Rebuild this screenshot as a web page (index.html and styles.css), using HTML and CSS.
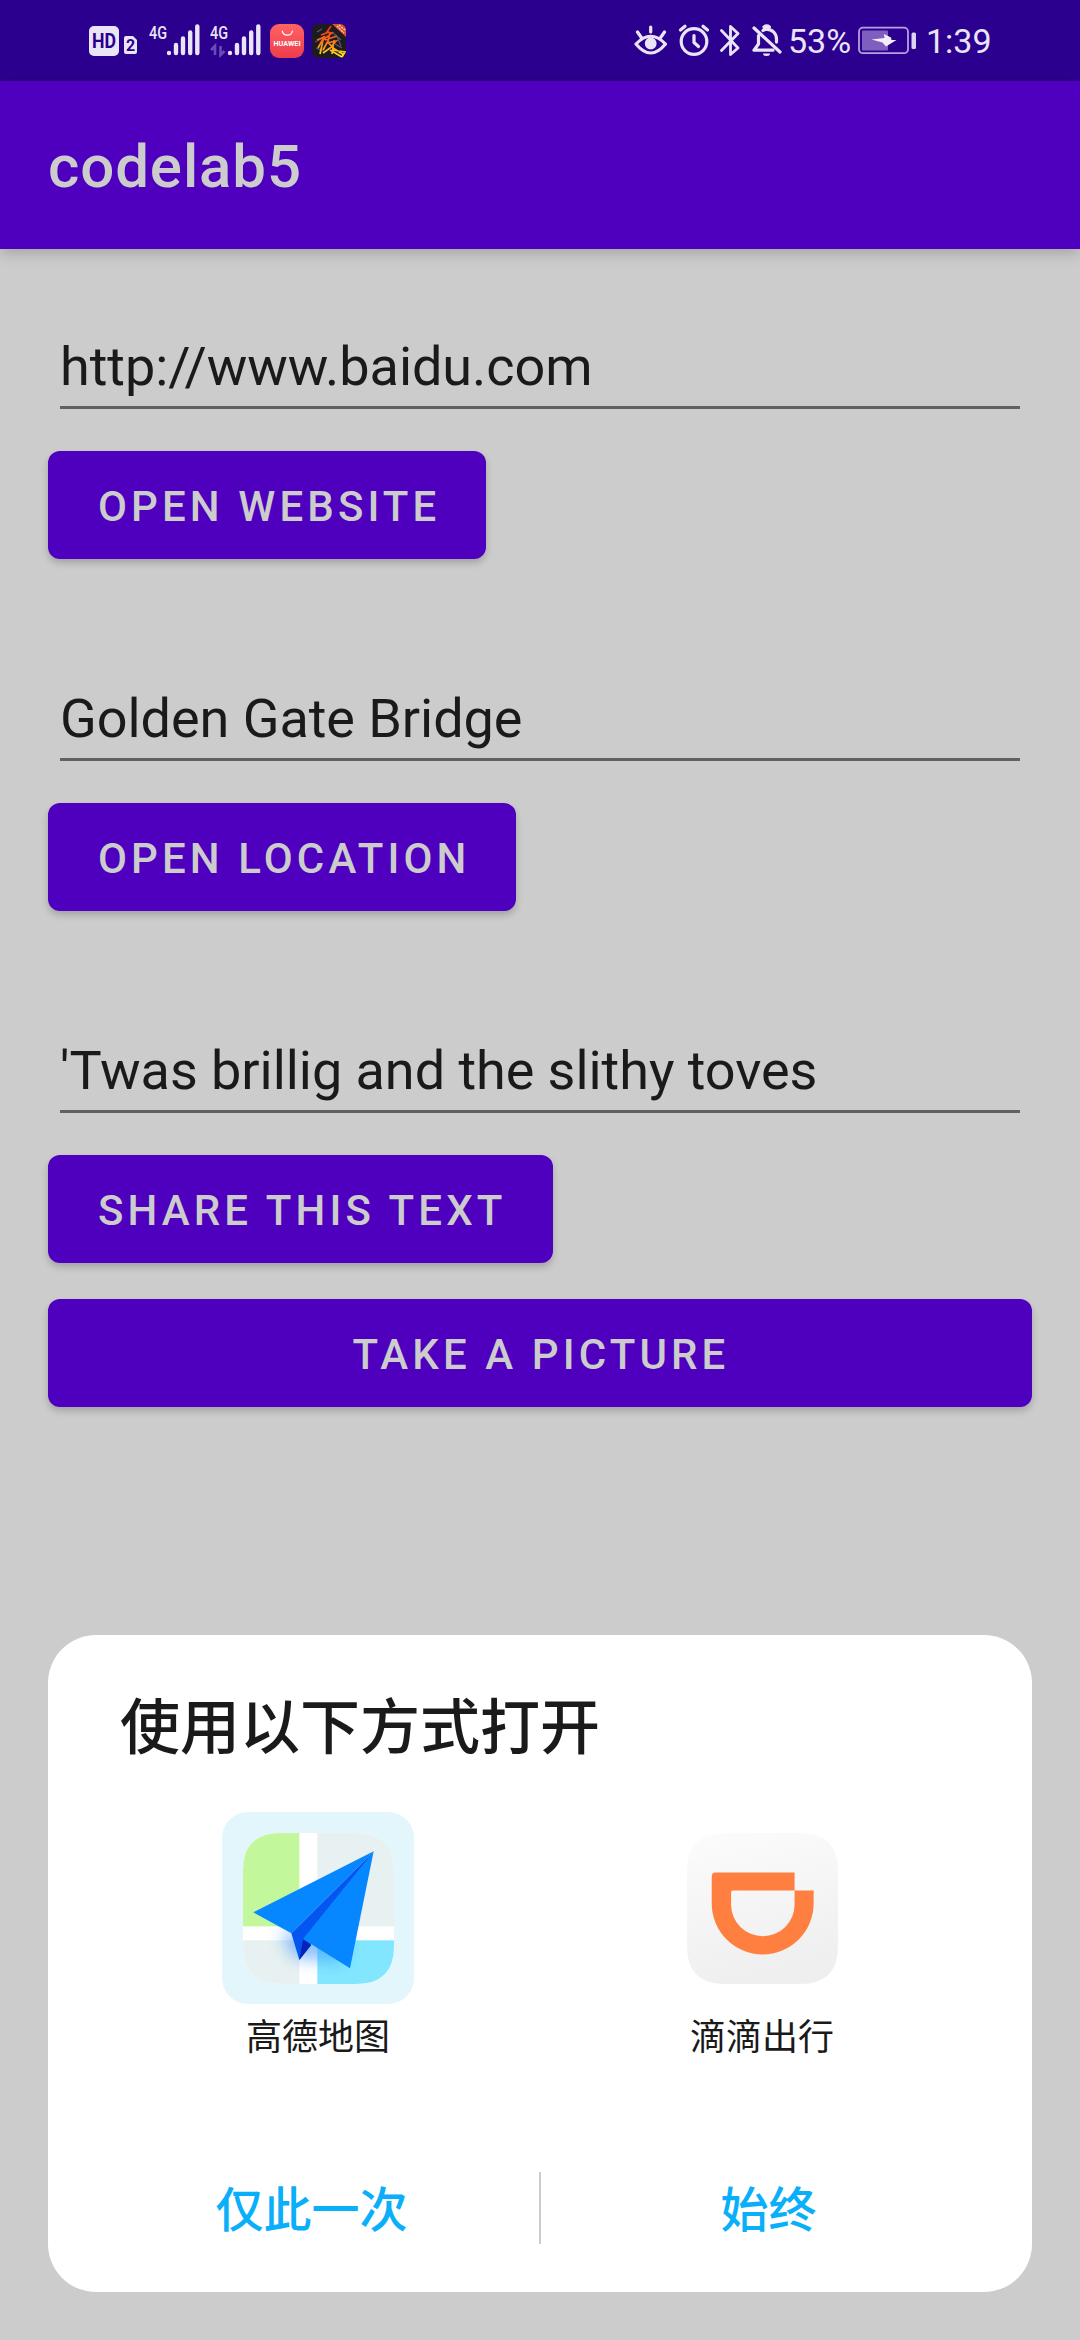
FILE: index.html
```html
<!DOCTYPE html>
<html lang="zh-CN">
<head>
<meta charset="utf-8">
<title>codelab5</title>
<link rel="stylesheet" href="styles.css">
</head>
<body>
<div class="screen">
  <header class="status">
    <div class="status-left">
      <svg class="icon-hd" width="48" height="34" viewBox="0 0 48 34">
        <rect x="0" y="2" width="30" height="30" rx="5" fill="#eae4f7"/>
        <text class="hd-text" x="15" y="24" textLength="24" lengthAdjust="spacingAndGlyphs">HD</text>
        <path d="M37 12h7l4 4v12a2 2 0 0 1-2 2h-9a2 2 0 0 1-2-2V14a2 2 0 0 1 2-2z" fill="#eae4f7"/>
        <text class="sim-text" x="41.5" y="27">2</text>
      </svg>
      <svg class="icon-signal" width="51" height="42" viewBox="0 -8 51 42">
        <text class="net-text" x="0" y="14.5" textLength="18" lengthAdjust="spacingAndGlyphs">4G</text>
        <path class="bars" d="M20 29v0M27 21v8M34 14.5v14.5M41.2 8.5V29M48.3 2.5V29"/>
      </svg>
      <svg class="icon-signal second" width="51" height="42" viewBox="0 -8 51 42">
        <text class="net-text" x="0" y="14.5" textLength="18" lengthAdjust="spacingAndGlyphs">4G</text>
        <path d="M1 26l4-4v9M10.500 22v9l4-4" fill="none" stroke="#6b4cb5" stroke-width="2.600"/>
        <path class="bars" d="M20 29v0M27 21v8M34 14.500v14.500M41.200 8.500V29M48.300 2.500V29"/>
      </svg>
      <svg class="icon-app" width="34" height="34" viewBox="0 0 34 34">
        <defs><linearGradient id="hw" x2="0" y2="1"><stop offset="0" stop-color="#ff6363"/><stop offset="1" stop-color="#ec3c4c"/></linearGradient></defs>
        <rect width="34" height="34" rx="9" fill="url(#hw)"/>
        <path d="M12.300 7a5 4.200 0 0 0 10 0" fill="none" stroke="#fff" stroke-width="1.200" stroke-linecap="round"/>
        <text class="hw-text" x="17" y="22" textLength="27" lengthAdjust="spacingAndGlyphs">HUAWEI</text>
      </svg>
      <svg class="icon-game" width="34" height="34" viewBox="0 0 34 34">
        <defs>
          <linearGradient id="fire" gradientUnits="userSpaceOnUse" x1="0" y1="2" x2="0" y2="32"><stop offset="0" stop-color="#f02a16"/><stop offset=".5" stop-color="#f5701c"/><stop offset="1" stop-color="#ffe21c"/></linearGradient>
          <clipPath id="gc"><rect width="34" height="34" rx="6"/></clipPath>
        </defs>
        <g clip-path="url(#gc)">
          <rect width="34" height="34" fill="#1c1c20"/>
          <path d="M5 8l5-3M3 18l6-3M20 8l9 8M25 13l4 9M4 24l7 3M23 20l7 4" stroke="#5c5c60" stroke-width="1.200" fill="none"/>
          <path d="M19 2l-4 6 5 1-9 7M9 11l8-3M5 16l7-3-6 11M12 12l-4 18M13 16l12-4M18 8l-2 9-5 9M14 19l10-2-6 7-7 5M16 18l5 6 11 7M22 16l-2 14M20 26l13 2-3 5-12-7" fill="none" stroke="url(#fire)" stroke-width="1.700"/>
          <path d="M20 0h14v13z" fill="#d9522c"/>
          <path d="M25 2l7 7M27 1l6 5" stroke="#f8d2b8" stroke-width="1.400" stroke-dasharray="2 1"/>
        </g>
      </svg>
    </div>
    <div class="status-right">
      <svg class="line-icon" width="34" height="34" viewBox="0 0 34 34">
        <path d="M2 20Q16.700 4.500 31.500 20Q16.700 38 2 20zM16.700 3v5M3.500 8l3.500 5M30.500 8L27 13"/>
        <circle class="solid" cx="16.700" cy="19.500" r="4.300"/>
      </svg>
      <svg class="line-icon alarm" width="32" height="34" viewBox="0 0 32 34">
        <circle cx="16" cy="17.500" r="12.800"/><path d="M16 11.500v7l4.500 4M2.500 6L7 2.300M29.500 6L25 2.300"/>
      </svg>
      <svg class="line-icon bluetooth" width="20" height="34" viewBox="0 0 20 34">
        <path d="M1.500 6.500L18 24l-7.500 6.500V2.500L18 9.500 1.500 26.500"/>
      </svg>
      <svg class="line-icon bell" width="30" height="34" viewBox="0 0 30 34">
        <path d="M2 4l26 24M6.500 11.500v8.500L2 26.200h19M11 6.500c1-.7 2-1.200 3-1.400 7 0 10.500 5 10.500 10v3M12 3q2.700-2 5.400 0"/>
        <path class="solid" d="M11 29.500h7a3.500 2.500 0 0 1-7 0z" stroke="none"/>
      </svg>
      <span class="status-text percent">53%</span>
      <svg class="battery" width="59" height="34" viewBox="0 0 59 34">
        <rect x="1" y="3.700" width="49" height="25.500" rx="4" fill="none" stroke="#b7a1e0" stroke-width="1.800"/>
        <rect x="4" y="6.500" width="26" height="20" rx="1" fill="#7e5fc0"/>
        <path d="M26 10l7 3.500 .5 2.500H38.500L28 22.500 24.500 18.500 13.500 15.500 26.500 14z" fill="#f2eefb"/>
        <rect x="53.500" y="8.500" width="4.500" height="16.500" rx="1.500" fill="#dcd2f2"/>
      </svg>
      <span class="status-text clock">1:39</span>
    </div>
  </header>
  <div class="appbar"><h1 class="app-title">codelab5</h1></div>
  <main class="content">
    <div class="field">http://www.baidu.com</div>
    <button class="btn">OPEN WEBSITE</button>
    <div class="field">Golden Gate Bridge</div>
    <button class="btn">OPEN LOCATION</button>
    <div class="field">'Twas brillig and the slithy toves</div>
    <button class="btn">SHARE THIS TEXT</button>
    <button class="btn wide">TAKE A PICTURE</button>
  </main>
  <section class="sheet">
    <h2 class="sheet-title">使用以下方式打开</h2>
    <div class="apps">
      <div class="app">
        <div class="tile selected">
          <svg width="151" height="151" viewBox="128 127 453 453">
            <defs>
              <clipPath id="mapclip"><path d="M128 240Q128 127 241 127H468Q581 127 581 240V467Q581 580 468 580H241Q128 580 128 467Z"/></clipPath>
              <filter id="soft" x="-40%" y="-40%" width="180%" height="180%"><feGaussianBlur stdDeviation="24"/></filter>
            </defs>
            <g clip-path="url(#mapclip)">
              <rect x="128" y="127" width="453" height="453" fill="#fff"/>
              <rect x="128" y="127" width="169" height="280" fill="#c2f79b"/>
              <rect x="351" y="127" width="230" height="280" fill="#e8f1f1"/>
              <rect x="128" y="449" width="169" height="131" fill="#e8f1f1"/>
              <rect x="351" y="449" width="230" height="131" fill="#82e6ff"/>
              <path d="M240 425L440 430 420 515 280 500z" fill="#3796ff" opacity=".6" filter="url(#soft)"/>
            </g>
            <path d="M520 182L273 428 297 508 340 450z" fill="#0555f0"/>
            <path d="M308 446L297 508 333 463z" fill="#0523b8"/>
            <path d="M520 182L159 365 273 428z" fill="#0787ff"/>
            <path d="M520 182L308 445 449 533z" fill="#0787ff"/>
          </svg>
        </div>
        <span class="app-name">高德地图</span>
      </div>
      <div class="app">
        <div class="tile">
          <svg width="151" height="151" viewBox="80 98 452 452">
            <defs><linearGradient id="dd" x2=".25" y2="1"><stop offset="0" stop-color="#fcfcfc"/><stop offset="1" stop-color="#efefef"/></linearGradient></defs>
            <path d="M80 211Q80 98 193 98H419Q532 98 532 211V437Q532 550 419 550H193Q80 550 80 437Z" fill="url(#dd)"/>
            <path fill="#ff7f41" fill-rule="evenodd" d="M166 216H402V270H459V309A152.500 152.500 0 0 1 154 309V228Q154 216 166 216ZM217 270Q212 270 212 275V312A95 95 0 0 0 402 312V270Z"/>
          </svg>
        </div>
        <span class="app-name">滴滴出行</span>
      </div>
    </div>
    <div class="actions">
      <button class="action">仅此一次</button>
      <span class="divider"></span>
      <button class="action">始终</button>
    </div>
  </section>
</div>
</body>
</html>
```
FILE: styles.css
```css
* { box-sizing: border-box; }
body { margin: 0; background: #ccc; font-family: Roboto, "Noto Sans CJK SC", sans-serif; }
button { border: 0; margin: 0; font-family: inherit; }
svg { display: block; flex: none; }

.screen {
  width: 1080px;
  height: 2340px;
  display: flex;
  flex-direction: column;
  background: #ccc;
  overflow: hidden;
}

/* status bar */
.status {
  height: 81px;
  flex: none;
  background: #2c008f;
  display: flex;
  justify-content: space-between;
  padding: 24px 88px 0 89px;
}
.status-left, .status-right { display: flex; height: 34px; }
.icon-signal { margin: -8px 0 0 12px; }
.icon-signal.second { margin-left: 10px; }
.icon-app { margin-left: 9px; }
.icon-game { margin-left: 8px; }
.hd-text { font-size: 20px; font-weight: 700; fill: #2c008f; text-anchor: middle; }
.sim-text { font-size: 16px; font-weight: 700; fill: #2c008f; text-anchor: middle; }
.net-text { font-size: 19px; font-weight: 500; fill: #eae4f7; }
.hw-text { font-size: 6.5px; font-weight: 700; fill: #fff; text-anchor: middle; }
.bars { fill: none; stroke: #eae4f7; stroke-width: 4.4; stroke-linecap: round; }
.line-icon { fill: none; stroke: #eae4f7; stroke-width: 3.2; stroke-linecap: round; stroke-linejoin: round; }
.line-icon .solid { fill: #eae4f7; }
.alarm { margin-left: 10px; }
.bluetooth { margin-left: 10px; stroke-width: 2.8; }
.bell { margin-left: 12px; }
.status-text { font-size: 34px; line-height: 34px; color: #eae4f7; white-space: nowrap; }
.percent { margin-left: 6px; width: 70px; }
.clock { margin-left: 9px; width: 66px; }

/* app bar */
.appbar {
  height: 168px;
  flex: none;
  display: flex;
  align-items: center;
  padding: 4px 48px 0;
  background: #4e00be;
  box-shadow: 0 4px 14px rgba(0, 0, 0, .2);
}
.app-title { margin: 0; font-size: 60px; font-weight: 500; line-height: 72px; letter-spacing: .9px; color: #ccc; }

/* form */
.content {
  flex: 1;
  display: flex;
  flex-direction: column;
  align-items: flex-start;
  padding: 86px 48px 0;
}
.field {
  width: 960px;
  height: 74px;
  margin: 0 12px 42px;
  border-bottom: 3px solid #616161;
  font-size: 54px;
  line-height: 64px;
  letter-spacing: -.05px;
  color: #1a1a1a;
  white-space: nowrap;
}
.btn + .field { margin-top: 128px; }
.btn {
  height: 108px;
  padding: 2px 46px 0 50px;
  border-radius: 12px;
  background: #4e00be;
  box-shadow: 0 4px 7px rgba(0, 0, 0, .2);
  color: #ccc;
  font-size: 42px;
  font-weight: 500;
  letter-spacing: 4.12px;
  white-space: nowrap;
}
.btn.wide { width: 100%; margin-top: 36px; padding-right: 48px; }

/* chooser sheet */
.sheet {
  height: 657px;
  flex: none;
  margin: 0 48px 48px;
  display: flex;
  flex-direction: column;
  border-radius: 48px;
  background: #fff;
  font-family: "Noto Sans CJK SC", sans-serif;
}
.sheet-title { margin: 43px 72px 0; font-size: 60px; font-weight: 500; line-height: 90px; color: #1a1a1a; }
.apps { display: flex; justify-content: space-between; padding: 44px 174px 0; }
.app { width: 192px; display: flex; flex-direction: column; align-items: center; }
.tile { width: 192px; height: 192px; border-radius: 26px; display: flex; align-items: center; justify-content: center; }
.tile.selected { background: #e3f6fc; }
.app-name { margin-top: 4px; font-size: 36px; line-height: 52px; color: #1a1a1a; }
.actions { margin: 112px 36px 0; height: 72px; display: flex; align-items: center; }
.action { flex: 1; padding: 0 0 4px; background: none; font-size: 48px; font-weight: 500; line-height: 68px; color: #0aaffa; }
.divider { width: 2px; height: 72px; background: #ccc; }
```
